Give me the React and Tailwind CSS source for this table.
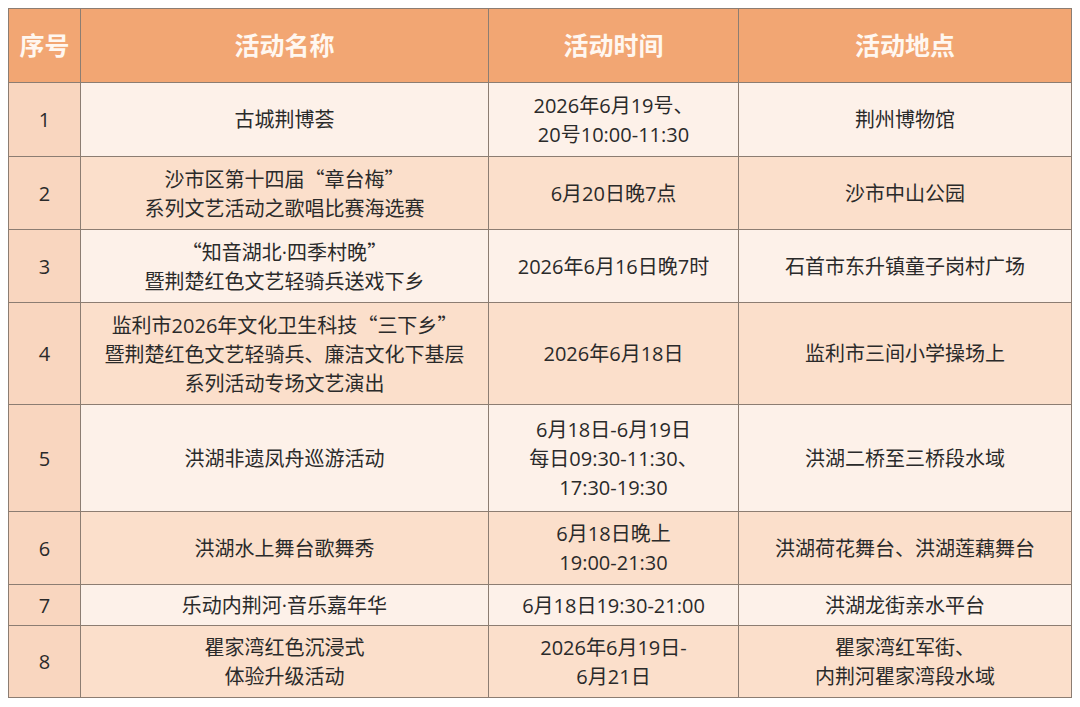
const Q = ({ children }) => (
  <span className="font-['Noto_Sans_CJK_SC',sans-serif]">{children}</span>
);

const rows = [
  { no: "1", name: ["古城荆博荟"], time: ["2026年6月19号、", "20号10:00-11:30"], place: ["荆州博物馆"], h: "h-[74px]" },
  {
    no: "2",
    name: [<>沙市区第十四届<Q>“</Q>章台梅<Q>”</Q></>, "系列文艺活动之歌唱比赛海选赛"],
    time: ["6月20日晚7点"],
    place: ["沙市中山公园"],
    h: "h-[73px]",
  },
  {
    no: "3",
    name: [<><Q>“</Q>知音湖北·四季村晚<Q>”</Q></>, "暨荆楚红色文艺轻骑兵送戏下乡"],
    time: ["2026年6月16日晚7时"],
    place: ["石首市东升镇童子岗村广场"],
    h: "h-[73px]",
  },
  {
    no: "4",
    name: [<>监利市2026年文化卫生科技<Q>“</Q>三下乡<Q>”</Q></>, "暨荆楚红色文艺轻骑兵、廉洁文化下基层", "系列活动专场文艺演出"],
    time: ["2026年6月18日"],
    place: ["监利市三间小学操场上"],
    h: "h-[102px]",
  },
  { no: "5", name: ["洪湖非遗凤舟巡游活动"], time: ["6月18日-6月19日", "每日09:30-11:30、", "17:30-19:30"], place: ["洪湖二桥至三桥段水域"], h: "h-[107px]" },
  { no: "6", name: ["洪湖水上舞台歌舞秀"], time: ["6月18日晚上", "19:00-21:30"], place: ["洪湖荷花舞台、洪湖莲藕舞台"], h: "h-[73px]" },
  { no: "7", name: ["乐动内荆河·音乐嘉年华"], time: ["6月18日19:30-21:00"], place: ["洪湖龙街亲水平台"], h: "h-[41px]" },
  { no: "8", name: ["瞿家湾红色沉浸式", "体验升级活动"], time: ["2026年6月19日-", "6月21日"], place: ["瞿家湾红军街、", "内荆河瞿家湾段水域"], h: "h-[72px]" },
];

const Lines = ({ lines }) => (
  <>
    {lines.map((l, i) => (
      <div key={i}>{l}</div>
    ))}
  </>
);

export default function App() {
  return (
    <div className="w-[1080px] h-[707px] bg-white pl-[8px] pt-[8px]">
      <table className="w-[1063px] table-fixed border-collapse border border-[#8c7d72] text-center text-[20px] leading-[29px] text-[#2a2a2a] font-['Open_Sans','Noto_Sans_CJK_SC',sans-serif]">
        <colgroup>
          <col className="w-[72px]" />
          <col className="w-[408px]" />
          <col className="w-[250px]" />
          <col className="w-[333px]" />
        </colgroup>
        <thead>
          <tr className="h-[74px] bg-[#f2a673] text-[25px] text-[#fff7f0]">
            <th className="border border-[#8c7d72] font-bold">序号</th>
            <th className="border border-[#8c7d72] font-bold">活动名称</th>
            <th className="border border-[#8c7d72] font-bold">活动时间</th>
            <th className="border border-[#8c7d72] font-bold">活动地点</th>
          </tr>
        </thead>
        <tbody>
          {rows.map((r, i) => {
            const bg = i % 2 === 0 ? "bg-[#fdf1e9]" : "bg-[#fbdfcb]";
            return (
              <tr key={r.no} className={r.h}>
                <td className="border border-[#8c7d72] bg-[#f9d6bf]">{r.no}</td>
                <td className={`border border-[#8c7d72] ${bg}`}>
                  <Lines lines={r.name} />
                </td>
                <td className={`border border-[#8c7d72] ${bg}`}>
                  <Lines lines={r.time} />
                </td>
                <td className={`border border-[#8c7d72] ${bg}`}>
                  <Lines lines={r.place} />
                </td>
              </tr>
            );
          })}
        </tbody>
      </table>
    </div>
  );
}
